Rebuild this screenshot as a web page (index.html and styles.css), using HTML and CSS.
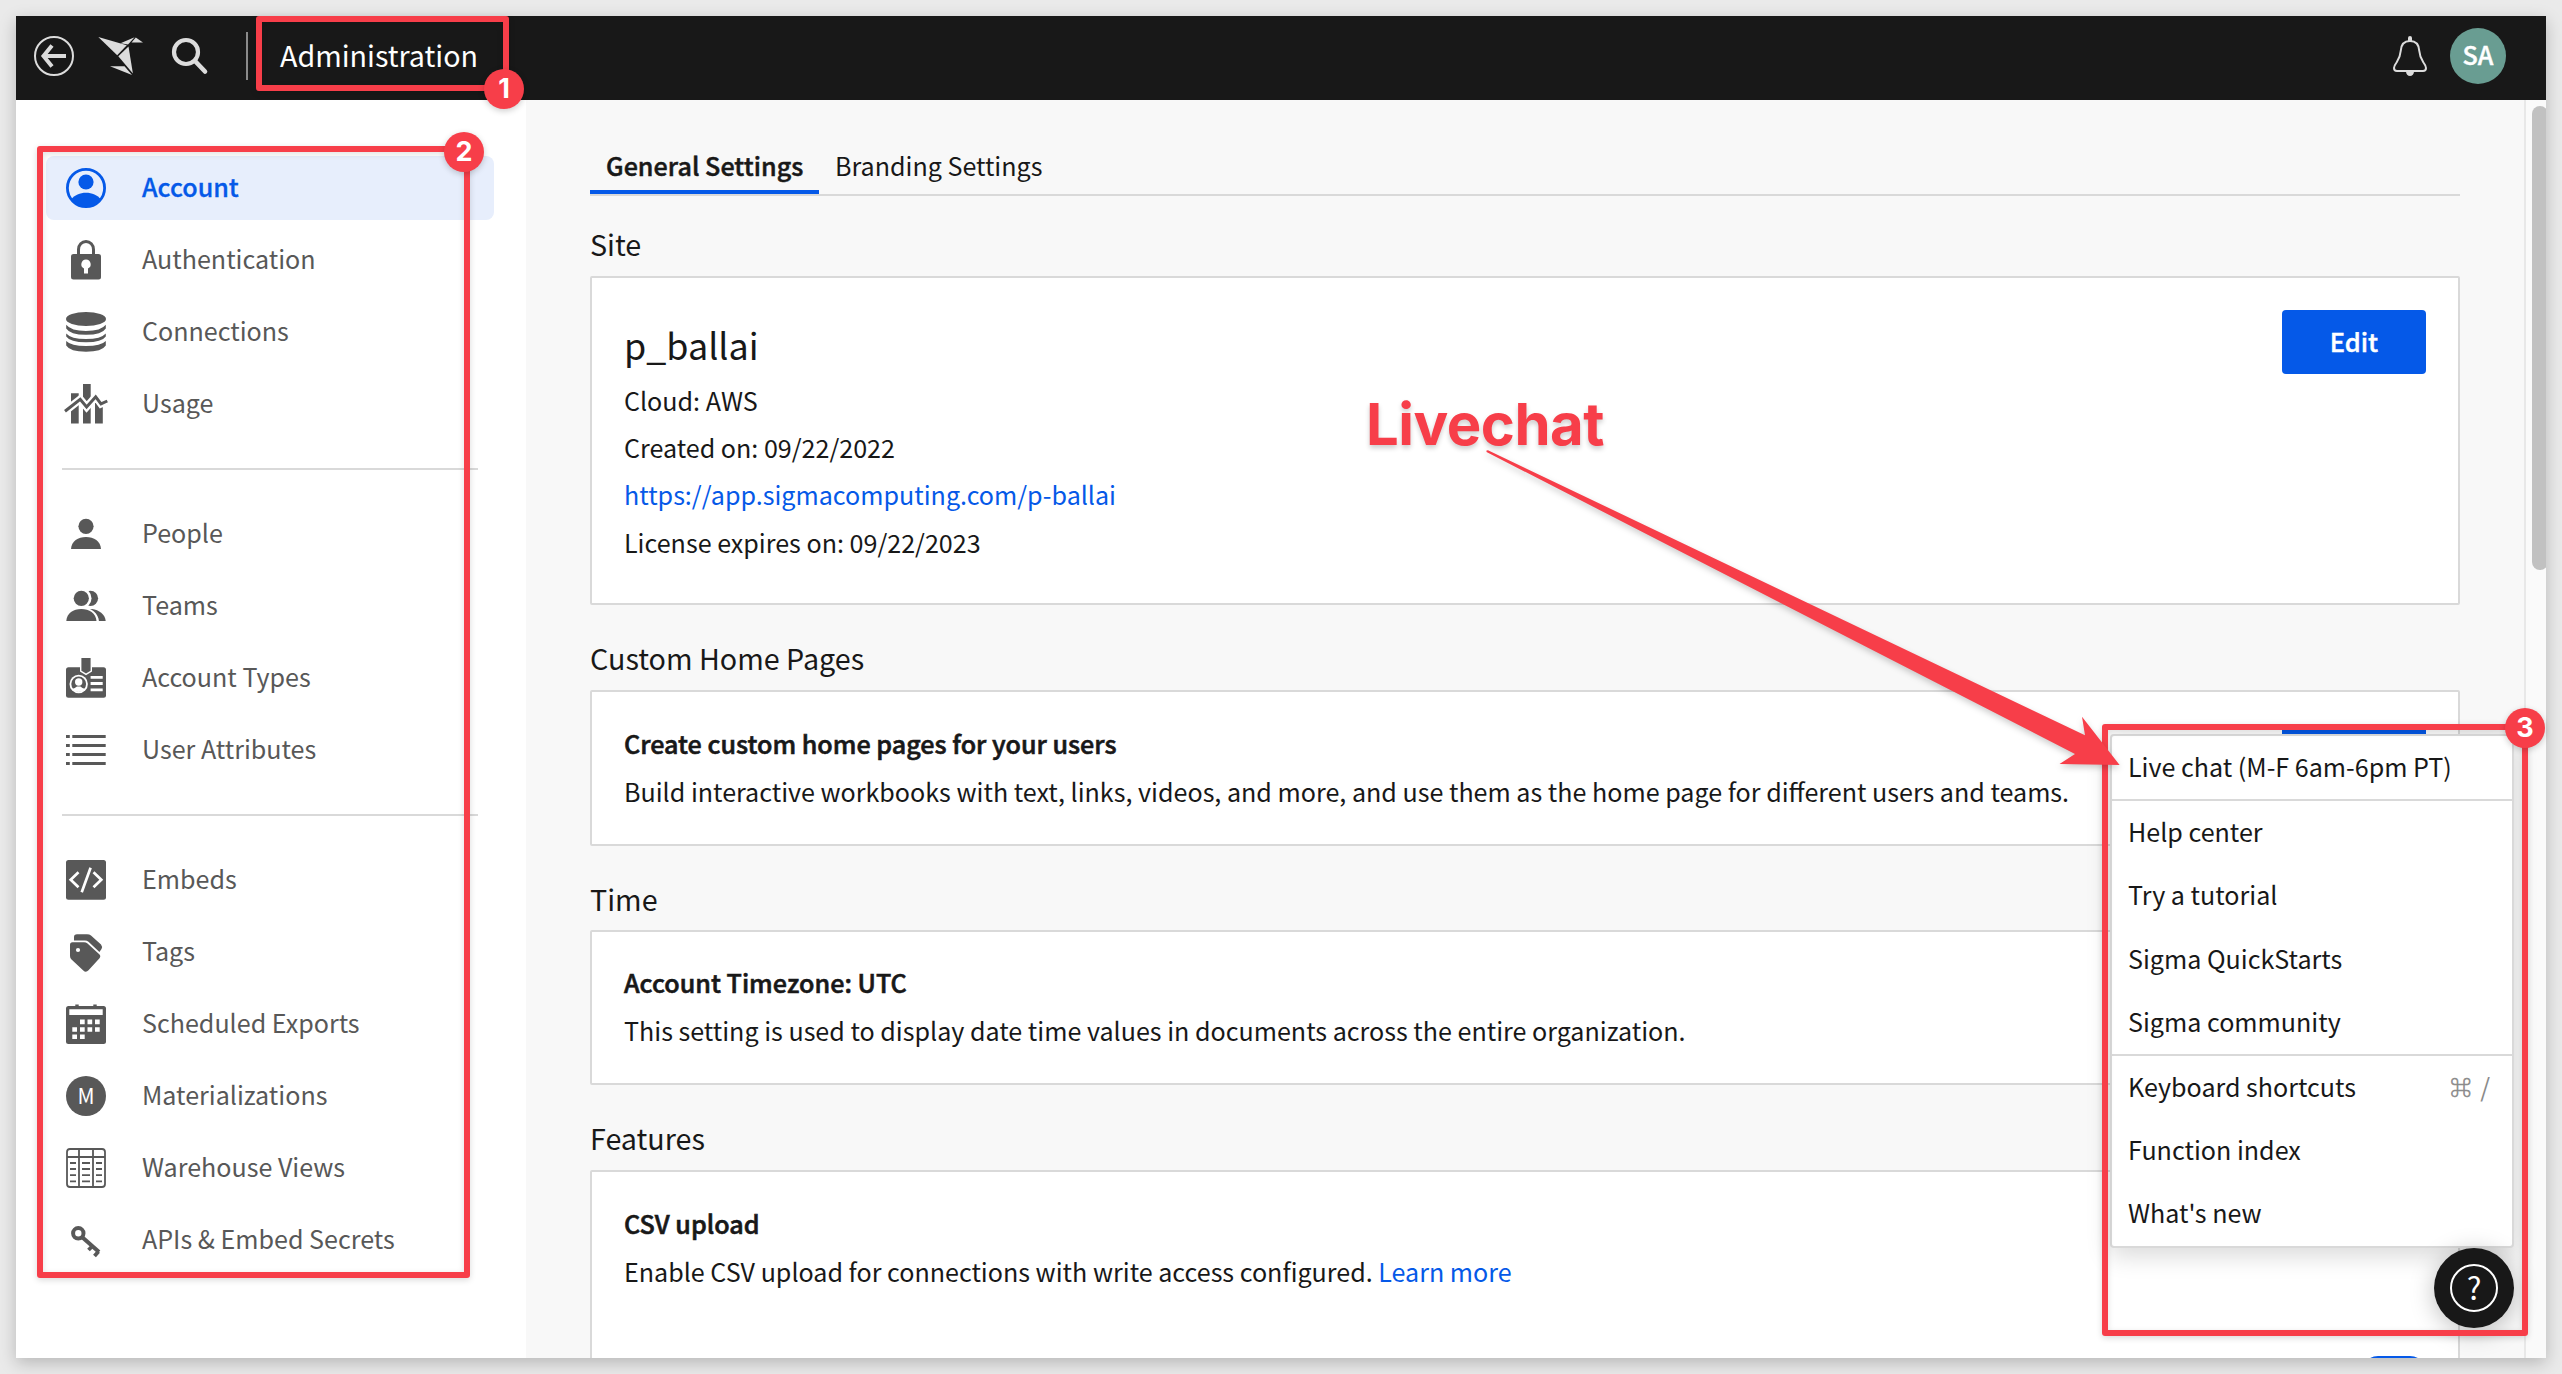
FILE: index.html
```
<!DOCTYPE html>
<html lang="en">
<head>
<meta charset="utf-8">
<title>Administration</title>
<link rel="stylesheet" href="styles.css">
</head>
<body>
<div class="window">
  <header class="topbar">
    <svg class="icon-back" viewBox="0 0 40 40"><circle cx="20" cy="20" r="19" fill="none" stroke="#dcdcdc" stroke-width="2"/><path d="M32 20H10M18 9.5L9.5 20L18 30.5" fill="none" stroke="#dcdcdc" stroke-width="4"/></svg>
    <svg class="icon-bird" viewBox="0 0 48 40" fill="#dcdcdc"><path d="M2.3 1L30.8 9.3L21.2 19.2Z"/><path d="M24.5 7.3L38.6 1.2L32 8.6Z"/><path d="M39.8 1.4L47 6.4L35.5 6.4Z"/><path d="M22.3 20.2L32.5 10.4L36.9 37.5Z"/><path d="M14 30.2H28.5L36 39Z"/></svg>
    <svg class="icon-search" viewBox="0 0 40 40"><circle cx="16" cy="16" r="12" fill="none" stroke="#dcdcdc" stroke-width="4.2"/><path d="M25 25L35 35.5" stroke="#dcdcdc" stroke-width="4.6" stroke-linecap="round"/></svg>
    <span class="topbar-divider"></span>
    <h1 class="topbar-title">Administration</h1>
    <svg class="icon-bell" viewBox="0 0 40 40"><path d="M20 5C13.500 5 11 9.500 10.700 15C10.300 21 8.500 23.500 6.500 26.500C4.700 29 4 30.500 4 32C4 34 5.200 35 7 35H33C34.800 35 36 34 36 32C36 30.500 35.300 29 33.500 26.500C31.500 23.500 29.700 21 29.300 15C29 9.500 26.500 5 20 5Z" fill="none" stroke="#dcdcdc" stroke-width="2"/><path d="M18 5V2a2 2 0 0 1 4 0V5ZM16 35.500H24A4 4.500 0 0 1 16 35.500Z" fill="#dcdcdc"/></svg>
    <span class="avatar">SA</span>
  </header>

  <div class="body">
    <nav class="sidebar">
      <div class="nav-group">
        <a class="nav-item active"><svg viewBox="0 0 40 40"><circle cx="20" cy="20" r="18.600" fill="none" stroke="currentColor" stroke-width="2.800"/><circle cx="20" cy="14" r="7.600"/><path d="M5 31.500C8.500 27 14 24.700 20 24.700S31.500 27 35 31.500A19 19 0 0 1 5 31.500Z"/></svg><span>Account</span></a>
        <a class="nav-item"><svg viewBox="0 0 40 40"><path d="M12.500 15V9.500a7.500 8 0 0 1 15 0V15" fill="none" stroke="currentColor" stroke-width="3"/><rect x="5" y="14" width="30" height="25.500" rx="2.500"/><path d="M20 19.500a4.800 4.800 0 0 1 2 9.100V33.500h-4V28.600a4.800 4.800 0 0 1 2-9.100Z" fill="#fff"/></svg><span>Authentication</span></a>
        <a class="nav-item"><svg viewBox="0 0 40 40"><ellipse cx="20" cy="7" rx="20" ry="6.900"/><path d="M.2 12.800Q5 19 20 19T39.800 12.800V16.500Q36 22.800 20 22.800T.2 16.500Z"/><path d="M.2 21.500Q5 27 20 27T39.800 21.500V24.500Q36 30.300 20 30.300T.2 24.500Z"/><path d="M.2 29Q5 34 20 34T39.800 29V33.500Q36 39.700 20 39.700T.2 33.500Z"/></svg><span>Connections</span></a>
        <a class="nav-item"><svg viewBox="0 0 40 40"><path d="M5 9.300H12.700V39.600H5ZM17 0H24.700V39.600H17ZM29 19H36.800V39.600H29Z"/><path d="M-1 27.300L14.200 15.300L20.600 23L29.700 12.800L35 19.800L41.300 17" fill="none" stroke="#fff" stroke-width="7.600"/><path d="M-1 27.300L14.200 15.300L20.600 23L29.700 12.800L35 19.800L41.300 17" fill="none" stroke="currentColor" stroke-width="3"/></svg><span>Usage</span></a>
      </div>
      <div class="nav-group">
        <a class="nav-item"><svg viewBox="0 0 40 40"><circle cx="20" cy="12.300" r="7.600"/><path d="M5 35C5.500 27 12 23 20 23S34.500 27 35 35Z"/></svg><span>People</span></a>
        <a class="nav-item"><svg viewBox="0 0 40 40"><circle cx="24.500" cy="12.300" r="7.600"/><path d="M10 35C14 27 20 23 26 23C33 24 39 28 39.700 35Z"/><circle cx="15.300" cy="12.300" r="10.200" fill="#fff"/><path d="M-2 35.500C-1 26 7 21 15.300 21.500C25 21 32.500 27 33 35.500Z" fill="#fff"/><circle cx="15.300" cy="12.300" r="7.600"/><path d="M.3 35C.8 27 7.300 23 15.300 23S29.800 27 30.500 35Z"/></svg><span>Teams</span></a>
        <a class="nav-item"><svg viewBox="0 0 40 40"><rect y="9.300" width="40" height="30.400" rx="2.500"/><path d="M14 8H26V13.500L20 17.200L14 13.500Z" fill="#fff"/><path d="M15.400 0H24.600V12.800L20 15.600L15.400 12.800Z"/><circle cx="12.700" cy="26" r="9.200" fill="#fff"/><circle cx="12.700" cy="26" r="7.400"/><circle cx="12.700" cy="24" r="3.700" fill="#fff"/><path d="M6 31Q9 30 11 28.500H14.400Q16 30 19.400 31A9 9 0 0 1 6 31Z" fill="#fff"/><path d="M24.600 19.300H36.700M24.600 25.500H36.700M24.600 31.900H36.700" stroke="#fff" stroke-width="2.800"/></svg><span>Account Types</span></a>
        <a class="nav-item"><svg viewBox="0 0 40 40"><path d="M0 6.500H3.800M6.300 6.500H39.700M0 15.500H3.800M6.300 15.500H39.700M0 24.500H3.800M6.300 24.500H39.700M0 33.500H3.800M6.300 33.500H39.700" stroke="currentColor" stroke-width="3"/></svg><span>User Attributes</span></a>
      </div>
      <div class="nav-group">
        <a class="nav-item"><svg viewBox="0 0 40 40"><rect width="40" height="39.700" rx="2.500"/><path d="M12.500 12.300L4.700 19.700L12.500 27.300M27.500 12.300L35.300 19.700L27.500 27.300M24.600 7.800L15.700 32.200" fill="none" stroke="#fff" stroke-width="2.700"/></svg><span>Embeds</span></a>
        <a class="nav-item"><svg viewBox="0 0 40 40"><path d="M6.500 10.300H18Q20 10.300 21.500 11.500L33 22Q35.300 24 33.500 26.200L22.500 38.200Q20 41 17.300 38.500L5.500 27.500Q4 26 4 24V12.800Q4 10.300 6.500 10.300Z"/><circle cx="12" cy="18" r="2.100" fill="#fff"/><path d="M8 8.400V5Q8 2.300 11 2.300H21Q23.500 2.300 25 3.600L35 12.500Q36.700 14.500 35.500 17L33.400 20L22.500 9.800Q21 8.400 19 8.400Z"/></svg><span>Tags</span></a>
        <a class="nav-item"><svg viewBox="0 0 40 40"><rect y="2" width="40" height="38" rx="2.500"/><path d="M9.300.6H12.700V3H9.300ZM27.300.6H30.700V3H27.300Z"/><path d="M3.300 5.200H36.700V11H3.300ZM14 15.500h4.700v4.700H14ZM21.500 15.500h4.700v4.700H21.500ZM29 15.500h4.700v4.700H29ZM6.300 23.300H11v4.500H6.300ZM14 23.300h4.700v4.500H14ZM21.500 23.300h4.700v4.500H21.500ZM29 23.300h4.700v4.500H29ZM6.300 30.600H11v4.500H6.300ZM14 30.600h4.700v4.500H14Z" fill="#fff"/></svg><span>Scheduled Exports</span></a>
        <a class="nav-item"><svg viewBox="0 0 40 40"><circle cx="20" cy="20" r="20"/><text x="20" y="28" class="glyph-m">M</text></svg><span>Materializations</span></a>
        <a class="nav-item"><svg viewBox="0 0 40 40"><path d="M4 1H36Q39 1 39 4V36Q39 39 36 39H4Q1 39 1 36V4Q1 1 4 1ZM1 9H39M13 1V39M27 1V39" fill="none" stroke="currentColor" stroke-width="1.800"/><path d="M4 15H10M4 21H10M4 27.200H10M4 33.300H10M16 15H24M16 21H24M16 27.200H24M16 33.300H24M30 15H36M30 21H36M30 27.200H36M30 33.300H36" stroke="currentColor" stroke-width="1.800"/></svg><span>Warehouse Views</span></a>
        <a class="nav-item"><svg viewBox="0 0 40 40" fill="none" stroke="currentColor"><circle cx="12.300" cy="13.300" r="5.200" stroke-width="4"/><path d="M16 17L33 32" stroke-width="4"/><path d="M26.500 26L22.500 30M32.500 31.500L28.500 36" stroke-width="3.800"/></svg><span>APIs &amp; Embed Secrets</span></a>
      </div>
    </nav>

    <main class="content">
      <div class="tabs">
        <a class="tab selected">General Settings</a>
        <a class="tab">Branding Settings</a>
      </div>

      <section class="section site">
        <h2>Site</h2>
        <div class="card">
          <div class="card-text">
            <h3 class="site-name">p_ballai</h3>
            <p>Cloud: AWS</p>
            <p>Created on: 09/22/2022</p>
            <p><a class="link">https://app.sigmacomputing.com/p-ballai</a></p>
            <p>License expires on: 09/22/2023</p>
          </div>
          <button class="button">Edit</button>
        </div>
      </section>

      <section class="section home-pages">
        <h2>Custom Home Pages</h2>
        <div class="card">
          <div class="card-text">
            <h3>Create custom home pages for your users</h3>
            <p>Build interactive workbooks with text, links, videos, and more, and use them as the home page for different users and teams.</p>
          </div>
          <button class="button" aria-label="Edit home pages"></button>
        </div>
      </section>

      <section class="section time">
        <h2>Time</h2>
        <div class="card">
          <div class="card-text">
            <h3>Account Timezone: UTC</h3>
            <p>This setting is used to display date time values in documents across the entire organization.</p>
          </div>
        </div>
      </section>

      <section class="section features">
        <h2>Features</h2>
        <div class="card">
          <div class="card-text">
            <h3>CSV upload</h3>
            <p>Enable CSV upload for connections with write access configured. <a class="link">Learn more</a></p>
          </div>
          <span class="toggle"></span>
        </div>
      </section>
    </main>

    <div class="scrollbar"><div class="thumb"></div></div>
  </div>
</div>

<div class="help-menu">
  <div class="menu-group"><a>Live chat (M-F 6am-6pm PT)</a></div>
  <div class="menu-group"><a>Help center</a><a>Try a tutorial</a><a>Sigma QuickStarts</a><a>Sigma community</a></div>
  <div class="menu-group"><a>Keyboard shortcuts<kbd><span class="cmd">⌘</span>/</kbd></a><a>Function index</a><a>What's new</a></div>
</div>
<button class="help-button"><span>?</span></button>

<div class="mark mark-1"></div>
<div class="mark mark-2"></div>
<div class="mark mark-3"></div>
<svg class="arrow" viewBox="0 0 650 330"><path d="M6.500 10.500L8 10.300L605 295.300L602 276.700L639.600 325L579.500 324L595 314L6.500 12Z"/></svg>
<div class="callout">Livechat</div>
<span class="badge badge-1">1</span>
<span class="badge badge-2">2</span>
<span class="badge badge-3">3</span>
</body>
</html>
```
FILE: styles.css
```
* { box-sizing: border-box; }

body {
  margin: 0;
  width: 2562px;
  height: 1374px;
  padding: 16px;
  overflow: hidden;
  position: relative;
  background: #eaeaea;
  color: #181818;
  font-family: "Noto Sans CJK JP", "Noto Sans", sans-serif;
  font-size: 25.08px;
}

h1, h2, h3, p { margin: 0; font-weight: 400; }
svg { display: block; flex: none; overflow: visible; }

.window {
  width: 2530px;
  height: 1342px;
  display: flex;
  flex-direction: column;
  background: #fff;
  box-shadow: 0 5px 16px rgba(0, 0, 0, .22);
}

/* Top bar */
.topbar {
  height: 84px;
  flex: none;
  display: flex;
  align-items: center;
  padding: 0 40px 4px 18px;
  background: #181818;
  color: #fff;
}
.icon-back { width: 40px; height: 40px; }
.icon-bird { width: 48px; height: 40px; margin-left: 22px; }
.icon-search { width: 40px; height: 40px; margin-left: 26px; }
.topbar-divider { width: 2px; height: 48px; margin-left: 36px; background: #8a8a8a; }
.topbar-title { margin-left: 32px; padding-bottom: 2px; font-size: 28.65px; line-height: 44px; }
.icon-bell { width: 40px; height: 40px; margin-left: auto; }
.avatar {
  width: 56px;
  height: 56px;
  margin-left: 20px;
  padding-bottom: 4px;
  border-radius: 50%;
  background: #699d92;
  font-weight: 500;
  -webkit-text-stroke: .4px currentColor;
  line-height: 52px;
  text-align: center;
}

.body { flex: 1; min-height: 0; display: flex; }

/* Sidebar */
.sidebar { width: 510px; flex: none; padding: 56px 32px 0 30px; color: #585858; }
.nav-group { display: flex; flex-direction: column; gap: 8px; }
.nav-group + .nav-group { margin-top: 32px; padding-top: 34px; position: relative; }
.nav-group + .nav-group::before {
  content: "";
  position: absolute;
  top: 0;
  left: 16px;
  right: 16px;
  height: 2px;
  background: #d9d9d9;
}
.nav-item { height: 64px; display: flex; align-items: center; gap: 36px; padding-left: 20px; border-radius: 8px; }
.nav-item svg { width: 40px; height: 40px; fill: currentColor; }
.nav-item svg[fill="none"] { fill: none; }
.nav-item span { padding-bottom: 4px; line-height: 40px; }
.nav-item.active { background: #e7eefc; color: #0559e8; font-weight: 500; -webkit-text-stroke: .3px currentColor; }
.nav-item.active svg { -webkit-text-stroke: 0; }
.glyph-m { font-size: 21px; text-anchor: middle; fill: #fff; }

/* Main content */
.content { flex: 1; min-width: 0; overflow: hidden; padding: 0 64px; background: #f8f8f8; }
.tabs { display: flex; height: 96px; padding-top: 41px; border-bottom: 2px solid #d9d9d9; }
.tab { height: 53px; padding: 0 16px; line-height: 48px; }
.tab.selected { width: 229px; border-bottom: 4px solid #0559e8; font-weight: 500; -webkit-text-stroke: .5px currentColor; letter-spacing: .05px; white-space: nowrap; }

.section h2 { padding: 29px 0 8px; font-size: 28.7px; line-height: 48px; }
.site h2 { padding-top: 24px; }
.time h2 { padding: 29px 0 7px; }
.card {
  display: flex;
  justify-content: space-between;
  align-items: flex-start;
  padding: 27px 32px 0;
  background: #fff;
  border: 2px solid #d9d9d9;
  border-radius: 2px;
}
.card-text { line-height: 48px; white-space: nowrap; font-size: 25.08px; }
.card h3 { font-weight: 500; -webkit-text-stroke: .6px currentColor; font-size: 25.12px; }
.card h3.site-name { font-size: 35.9px; line-height: 60px; font-weight: 400; -webkit-text-stroke: 0; margin-bottom: 3px; }
.site .card { height: 329px; padding-top: 36px; }
.site .card-text { line-height: 47.2px; }
.home-pages .card { height: 156px; }
.time .card { height: 155px; padding-top: 26px; }
.features .card { height: 300px; }
.link { color: #0559e8; }
.button {
  width: 144px;
  height: 64px;
  flex: none;
  padding: 0 0 2px;
  border: 0;
  border-radius: 4px;
  background: #0559e8;
  color: #fff;
  font: 500 25.4px "Noto Sans CJK JP", sans-serif;
  -webkit-text-stroke: .4px currentColor;
}
.site .button { margin-top: -4px; }
.home-pages .button { margin: 5px 0 0 -200px; }
.toggle { width: 64px; height: 32px; margin-top: 157px; border-radius: 16px; background: #0559e8; }

.scrollbar { width: 22px; flex: none; padding: 6px 0 0 6px; border-left: 2px solid #e8e8e8; background: #fafafa; overflow: hidden; }
.thumb { width: 16px; height: 464px; border-radius: 8px; background: #c1c1c1; }

/* Help menu */
.help-menu {
  position: absolute;
  left: 2110px;
  top: 734px;
  width: 404px;
  height: 514px;
  border: 2px solid #d9d9d9;
  border-radius: 4px;
  background: #fff;
  box-shadow: 0 8px 24px rgba(0, 0, 0, .15);
}
.menu-group + .menu-group { border-top: 2px solid #d9d9d9; }
.menu-group a { display: flex; justify-content: space-between; height: 63.2px; padding: 0 22px 0 16px; line-height: 60px; }
.menu-group kbd { display: flex; gap: 9px; font: inherit; color: #8a8a8a; }
.cmd { font-size: 21px; -webkit-text-stroke: .6px currentColor; }

.help-button {
  position: absolute;
  left: 2434px;
  top: 1248px;
  width: 80px;
  height: 80px;
  display: flex;
  align-items: center;
  justify-content: center;
  padding: 0;
  border: 0;
  border-radius: 50%;
  background: #181818;
  color: #fff;
  box-shadow: 0 4px 24px rgba(0, 0, 0, .25);
}
.help-button span { width: 48px; height: 48px; border: 2px solid #fff; border-radius: 50%; font: 400 31px/41px "Noto Sans CJK JP", sans-serif; }

/* Annotations */
.mark { position: absolute; border: 6px solid #f73e49; border-radius: 3px; box-shadow: 0 2px 6px rgba(0, 0, 0, .15), inset 0 2px 6px rgba(0, 0, 0, .12); }
.mark-1 { left: 256px; top: 16px; width: 253px; height: 75px; }
.mark-2 { left: 37px; top: 146px; width: 433px; height: 1132px; }
.mark-3 { left: 2102px; top: 724px; width: 426px; height: 612px; }
.arrow { position: absolute; left: 1480px; top: 440px; width: 650px; height: 330px; fill: #f73e49; filter: drop-shadow(0 3px 3px rgba(0, 0, 0, .2)); }
.callout {
  position: absolute;
  left: 1366px;
  top: 388px;
  font: 700 58px/72px Inter, sans-serif;
  letter-spacing: -.5px;
  color: #f73e49;
  text-shadow: 0 3px 5px rgba(0, 0, 0, .2);
}
.badge {
  position: absolute;
  width: 40px;
  height: 40px;
  border-radius: 50%;
  background: #f73e49;
  color: #fff;
  font: 700 27px/40px Inter, sans-serif;
  text-align: center;
  box-shadow: 0 2px 6px rgba(0, 0, 0, .2);
}
.badge-1 { left: 484px; top: 69px; }
.badge-2 { left: 444px; top: 132px; }
.badge-3 { left: 2505px; top: 708px; }
```
